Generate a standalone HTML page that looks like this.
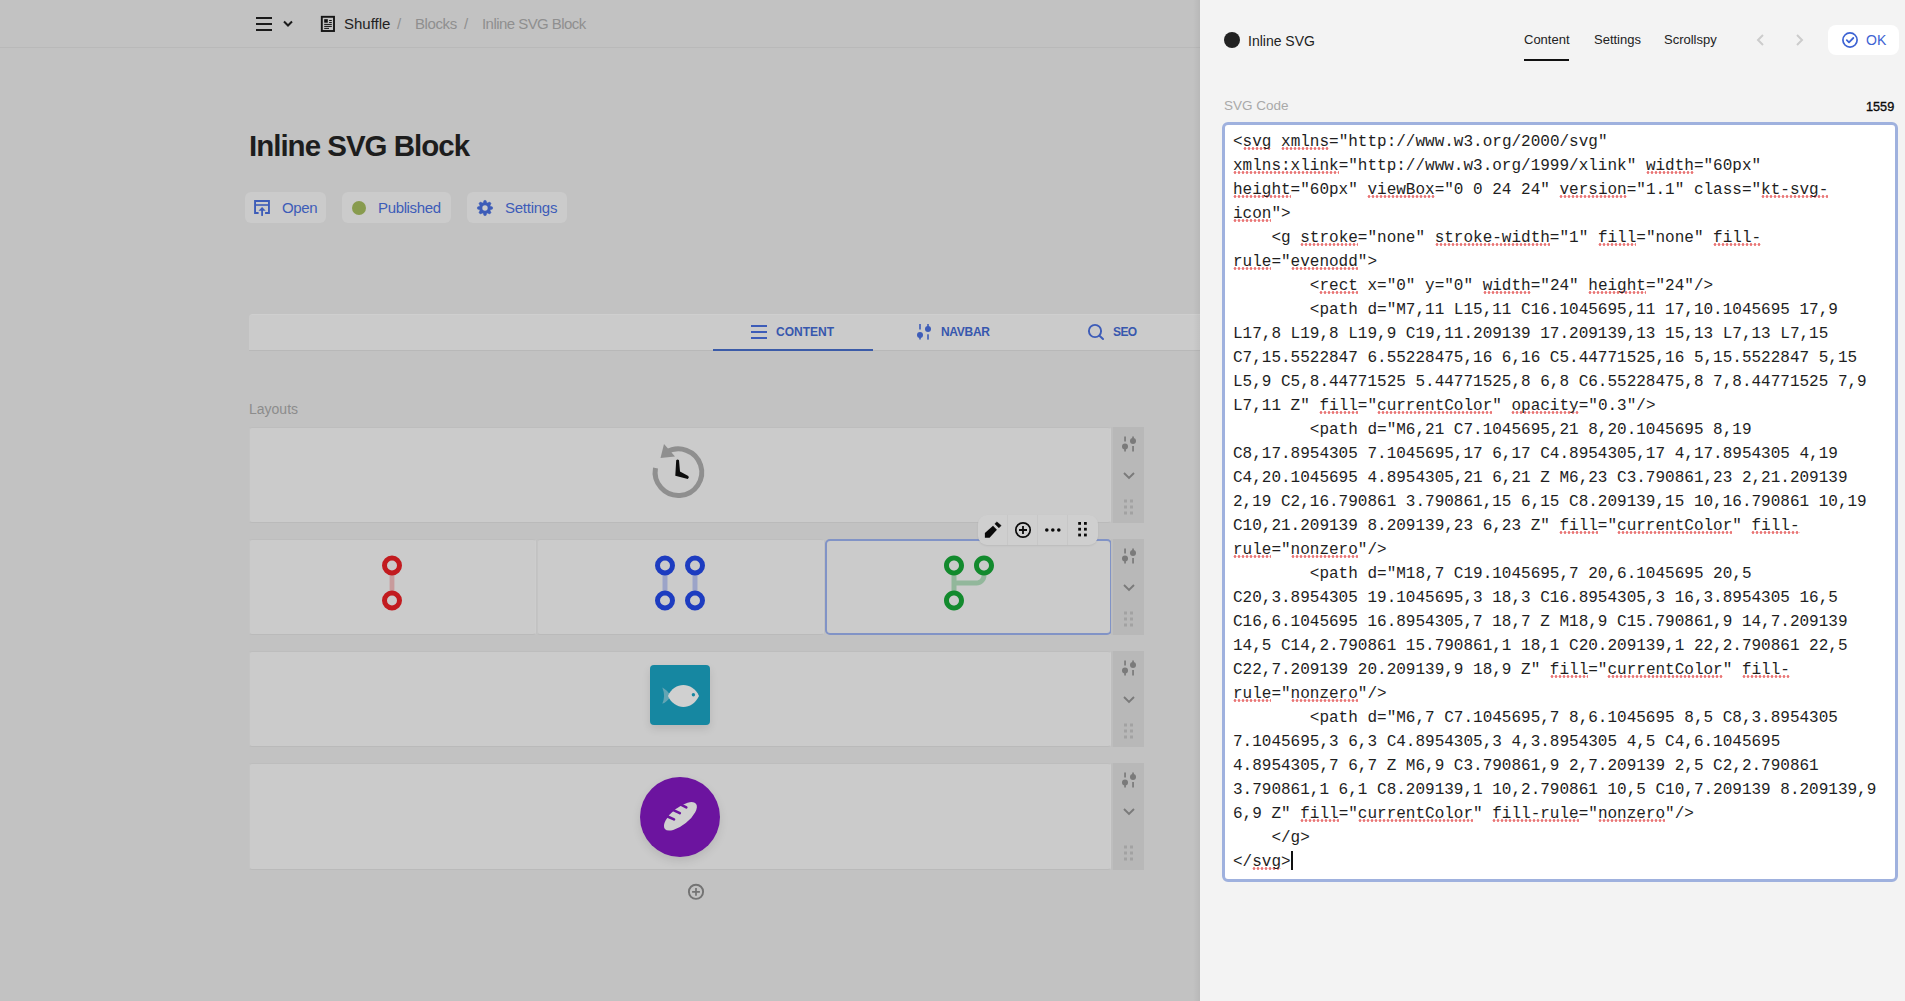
<!DOCTYPE html>
<html><head><meta charset="utf-8">
<style>
*{box-sizing:border-box;margin:0;padding:0}
html,body{width:1905px;height:1001px;overflow:hidden;font-family:"Liberation Sans",sans-serif;background:#c2c2c2}
.a{position:absolute}
#left{position:absolute;left:0;top:0;width:1200px;height:1001px;background:#c2c2c2;overflow:hidden}
#shade{position:absolute;left:1193px;top:0;width:7px;height:1001px;background:linear-gradient(to right,rgba(0,0,0,0),rgba(0,0,0,0.05))}
#hdr{position:absolute;left:0;top:0;width:1200px;height:48px;border-bottom:1px solid #b9b9b9}
.crumb{position:absolute;top:14px;font-size:15px;line-height:20px;white-space:nowrap}
#title{position:absolute;left:249px;top:127px;font-size:29.5px;letter-spacing:-1px;font-weight:bold;color:#1d1d1d;line-height:38px;white-space:nowrap}
.btn{position:absolute;top:192px;height:31px;border-radius:6px;background:#cbcbcb;color:#3d5cb8;font-size:15px}
.btn span{position:absolute;top:7px;line-height:17px;white-space:nowrap}
#tabs{position:absolute;left:249px;top:314px;width:980px;height:37px;background:#cbcbcb;border-top:1px solid #cfcfcf;border-bottom:1px solid #b8b8b8;border-radius:4px 0 0 0}
.tab{position:absolute;top:324px;font-size:12px;font-weight:bold;color:#3757ae;line-height:16px;white-space:nowrap}
#layouts{position:absolute;left:249px;top:401px;font-size:14px;color:#8c8c8c;line-height:16px}
.card{position:absolute;background:#cbcbcb;border:1px solid #c4c4c4;border-top-color:#bdbdbd;border-bottom-color:#bababa;border-right-color:#cdcdcd;border-radius:3px}
.ctrl{position:absolute;left:1111px;width:33px;background:#b8b8b8}
.ctrl:before{content:"";position:absolute;left:0;top:0;width:2px;height:100%;background:#bebebe}
.ctrl svg{position:absolute;left:2px;top:0}
#right{position:absolute;left:1200px;top:0;width:705px;height:1001px;background:#f3f3f3}
.rt{position:absolute;white-space:nowrap;color:#222;line-height:16px}
#ta{position:absolute;left:1222px;top:122px;width:676px;height:760px;border:3px solid #9fb1de;border-radius:6px;background:#fff}
#code{position:absolute;left:1233px;top:130px;font-family:"Liberation Mono",monospace;font-size:16px;line-height:24px;color:#1e1e1e;white-space:pre}
#code i{font-style:normal;background-image:radial-gradient(circle at 2px 1.5px,rgba(228,84,84,0.8) 1px,rgba(228,84,84,0) 1.8px);background-repeat:repeat-x;background-size:4px 3px;background-position:0 calc(100% - 1px)}
</style></head><body>
<div id="left">
  <div id="hdr"></div>
  <svg class="a" style="left:250px;top:10px" width="50" height="30" viewBox="0 0 50 30">
    <rect x="6" y="7" width="16" height="2" fill="#1a1a1a"/>
    <rect x="6" y="13" width="16" height="2" fill="#1a1a1a"/>
    <rect x="6" y="19" width="16" height="2" fill="#1a1a1a"/>
    <path d="M34 11.5 L38 15.5 L42 11.5" stroke="#1a1a1a" stroke-width="2" fill="none"/>
  </svg>
  <svg class="a" style="left:320px;top:15px" width="18" height="18" viewBox="0 0 18 18">
    <rect x="1.8" y="1.8" width="12.2" height="14.2" stroke="#151515" stroke-width="1.9" fill="none"/>
    <rect x="4.2" y="4.2" width="3.6" height="3.5" fill="#111"/>
    <rect x="9.1" y="5" width="2.7" height="1" fill="#111"/>
    <rect x="9.1" y="6.95" width="2.7" height="1" fill="#111"/>
    <rect x="4.2" y="8.9" width="7.6" height="1" fill="#111"/>
    <rect x="4.2" y="10.9" width="7.6" height="1" fill="#111"/>
    <rect x="4.2" y="12.9" width="4.8" height="1" fill="#111"/>
  </svg>
  <div class="crumb" style="left:344px;color:#1f1f1f">Shuffle</div>
  <div class="crumb" style="left:397px;color:#8f8f8f">/</div>
  <div class="crumb" style="left:415px;color:#8f8f8f;letter-spacing:-0.4px">Blocks</div>
  <div class="crumb" style="left:464px;color:#8f8f8f">/</div>
  <div class="crumb" style="left:482px;color:#8f8f8f;letter-spacing:-0.55px">Inline SVG Block</div>
  <div id="title">Inline SVG Block</div>

  <div class="btn" style="left:245px;width:81px">
    <svg class="a" style="left:8px;top:7px" width="18" height="18" viewBox="0 0 18 18">
      <path d="M5.6 13.95 H2.05 V1.95 H15.95 V13.95 H12.1" stroke="#3d5cb8" stroke-width="1.9" fill="none"/>
      <rect x="2" y="5.2" width="14" height="1.6" fill="#3d5cb8"/>
      <path d="M5.5 11.7 L9.1 8 L12.7 11.7 Z" fill="#3d5cb8"/>
      <rect x="8.2" y="10.5" width="1.8" height="6.4" fill="#3d5cb8"/>
    </svg>
    <span style="left:37px;letter-spacing:-0.4px">Open</span>
  </div>
  <div class="btn" style="left:342px;width:109px">
    <div class="a" style="left:10px;top:9px;width:14px;height:14px;border-radius:50%;background:#889b4e"></div>
    <span style="left:36px;letter-spacing:-0.35px">Published</span>
  </div>
  <div class="btn" style="left:467px;width:100px">
    <svg class="a" style="left:9px;top:7px" width="18" height="18" viewBox="-9 -9 18 18">
      <path d="M-1.82 -5.29 L-0.99 -7.53 L0.99 -7.53 L1.82 -5.29 L2.45 -5.03 L4.63 -6.03 L6.03 -4.63 L5.03 -2.45 L5.29 -1.82 L7.53 -0.99 L7.53 0.99 L5.29 1.82 L5.03 2.45 L6.03 4.63 L4.63 6.03 L2.45 5.03 L1.82 5.29 L0.99 7.53 L-0.99 7.53 L-1.82 5.29 L-2.45 5.03 L-4.63 6.03 L-6.03 4.63 L-5.03 2.45 L-5.29 1.82 L-7.53 0.99 L-7.53 -0.99 L-5.29 -1.82 L-5.03 -2.45 L-6.03 -4.63 L-4.63 -6.03 L-2.45 -5.03 Z" fill="#3d5cb8" stroke="#3d5cb8" stroke-width="0.5" stroke-linejoin="round"/>
      <circle r="2.7" fill="#cbcbcb"/>
    </svg>
    <span style="left:38px;letter-spacing:-0.25px">Settings</span>
  </div>

  <div id="tabs"></div>
  <div class="a" style="left:713px;top:349px;width:160px;height:2px;background:#3b5ba8"></div>
  <svg class="a" style="left:751px;top:324px" width="16" height="16" viewBox="0 0 16 16">
    <rect x="0" y="1" width="16" height="2" fill="#3d5cb8"/><rect x="0" y="7" width="16" height="2" fill="#3d5cb8"/><rect x="0" y="13" width="16" height="2" fill="#3d5cb8"/>
  </svg>
  <div class="tab" style="left:776px">CONTENT</div>
  <svg class="a" style="left:914px;top:322px" width="20" height="20" viewBox="0 0 20 20">
    <g fill="#3d5cb8">
    <rect x="5.2" y="2" width="1.6" height="5.5"/><circle cx="6" cy="13" r="3"/><rect x="5.2" y="13" width="1.6" height="4.5"/>
    <rect x="13.2" y="2" width="1.6" height="5"/><circle cx="14" cy="7" r="3"/><rect x="13.2" y="12.3" width="1.6" height="5.3"/>
    </g>
  </svg>
  <div class="tab" style="left:941px;letter-spacing:-0.3px">NAVBAR</div>
  <svg class="a" style="left:1085px;top:321px" width="22" height="22" viewBox="0 0 22 22">
    <circle cx="10" cy="10" r="6.1" stroke="#3d5cb8" stroke-width="1.9" fill="none"/>
    <path d="M14.5 14.8 L18 18" stroke="#3d5cb8" stroke-width="2" stroke-linecap="round"/>
  </svg>
  <div class="tab" style="left:1113px;letter-spacing:-0.6px">SEO</div>

  <div id="layouts">Layouts</div>
  <div class="card" style="left:249px;top:427px;width:862px;height:96px"></div>
  <div class="card" style="left:249px;top:539px;width:287px;height:96px"></div>
  <div class="card" style="left:537px;top:539px;width:287px;height:96px"></div>
  <div class="card" style="left:825px;top:539px;width:287px;height:96px;border:2px solid #8193c6;border-radius:5px"></div>
  <div class="card" style="left:249px;top:651px;width:862px;height:96px"></div>
  <div class="card" style="left:249px;top:763px;width:862px;height:107px"></div>
  <div class="ctrl" style="top:427px;height:96px"><svg width="31" height="96" viewBox="0 0 31 96">
<g fill="#7a7a7a"><rect x="11.2" y="9.5" width="1.7" height="5"/><circle cx="12" cy="19.5" r="3"/><rect x="11.2" y="19.5" width="1.7" height="5"/>
<rect x="19.2" y="9.5" width="1.7" height="4"/><circle cx="20" cy="14" r="3"/><rect x="19.2" y="19" width="1.7" height="5.5"/></g>
<path d="M11 46 L16 51 L21 46" stroke="#7a7a7a" stroke-width="1.9" fill="none"/>
<g fill="#a2a2a2"><rect x="11" y="72.5" width="3" height="3"/><rect x="17" y="72.5" width="3" height="3"/><rect x="11" y="78.5" width="3" height="3"/><rect x="17" y="78.5" width="3" height="3"/><rect x="11" y="84.5" width="3" height="3"/><rect x="17" y="84.5" width="3" height="3"/></g>
</svg></div><div class="ctrl" style="top:539px;height:96px"><svg width="31" height="96" viewBox="0 0 31 96">
<g fill="#7a7a7a"><rect x="11.2" y="9.5" width="1.7" height="5"/><circle cx="12" cy="19.5" r="3"/><rect x="11.2" y="19.5" width="1.7" height="5"/>
<rect x="19.2" y="9.5" width="1.7" height="4"/><circle cx="20" cy="14" r="3"/><rect x="19.2" y="19" width="1.7" height="5.5"/></g>
<path d="M11 46 L16 51 L21 46" stroke="#7a7a7a" stroke-width="1.9" fill="none"/>
<g fill="#a2a2a2"><rect x="11" y="72.5" width="3" height="3"/><rect x="17" y="72.5" width="3" height="3"/><rect x="11" y="78.5" width="3" height="3"/><rect x="17" y="78.5" width="3" height="3"/><rect x="11" y="84.5" width="3" height="3"/><rect x="17" y="84.5" width="3" height="3"/></g>
</svg></div><div class="ctrl" style="top:651px;height:96px"><svg width="31" height="96" viewBox="0 0 31 96">
<g fill="#7a7a7a"><rect x="11.2" y="9.5" width="1.7" height="5"/><circle cx="12" cy="19.5" r="3"/><rect x="11.2" y="19.5" width="1.7" height="5"/>
<rect x="19.2" y="9.5" width="1.7" height="4"/><circle cx="20" cy="14" r="3"/><rect x="19.2" y="19" width="1.7" height="5.5"/></g>
<path d="M11 46 L16 51 L21 46" stroke="#7a7a7a" stroke-width="1.9" fill="none"/>
<g fill="#a2a2a2"><rect x="11" y="72.5" width="3" height="3"/><rect x="17" y="72.5" width="3" height="3"/><rect x="11" y="78.5" width="3" height="3"/><rect x="17" y="78.5" width="3" height="3"/><rect x="11" y="84.5" width="3" height="3"/><rect x="17" y="84.5" width="3" height="3"/></g>
</svg></div><div class="ctrl" style="top:763px;height:107px"><svg width="31" height="107" viewBox="0 0 31 107">
<g fill="#7a7a7a"><rect x="11.2" y="9.5" width="1.7" height="5"/><circle cx="12" cy="19.5" r="3"/><rect x="11.2" y="19.5" width="1.7" height="5"/>
<rect x="19.2" y="9.5" width="1.7" height="4"/><circle cx="20" cy="14" r="3"/><rect x="19.2" y="19" width="1.7" height="5.5"/></g>
<path d="M11 46 L16 51 L21 46" stroke="#7a7a7a" stroke-width="1.9" fill="none"/>
<g fill="#a2a2a2"><rect x="11" y="82.5" width="3" height="3"/><rect x="17" y="82.5" width="3" height="3"/><rect x="11" y="88.5" width="3" height="3"/><rect x="17" y="88.5" width="3" height="3"/><rect x="11" y="94.5" width="3" height="3"/><rect x="17" y="94.5" width="3" height="3"/></g>
</svg></div>

  <!-- clock history -->
  <svg class="a" style="left:648px;top:442px" width="60" height="60" viewBox="0 0 60 60">
    <path d="M7.5 26 A23.3 23.3 0 1 0 18 10.5" stroke="#8f8f8f" stroke-width="5" fill="none"/>
    <path d="M16 2 L12.5 16 L27 14.5 Z" fill="#8f8f8f"/>
    <path d="M28.2 18.3 Q29.6 16.6 31 18.3 L32 29.6 L40.3 34.1 Q41.6 35.8 39.8 37.1 L27.3 33.8 Z" fill="#0d0d0d"/>
  </svg>
  <!-- red -->
  <svg class="a" style="left:362px;top:552.5px" width="60" height="60" viewBox="0 0 24 24">
    <rect x="11.05" y="8.5" width="1.9" height="7" fill="#c21b1f" opacity="0.27"/>
    <circle cx="12" cy="5" r="3" stroke="#c21b1f" stroke-width="2" fill="none"/>
    <circle cx="12" cy="19" r="3" stroke="#c21b1f" stroke-width="2" fill="none"/>
  </svg>
  <!-- blue -->
  <svg class="a" style="left:650px;top:552.5px" width="60" height="60" viewBox="0 0 24 24">
    <g fill="#1d3cc0">
    <rect x="5" y="8.5" width="2" height="7" opacity="0.27"/><rect x="17" y="8.5" width="2" height="7" opacity="0.27"/>
    </g>
    <g stroke="#1d3cc0" stroke-width="2" fill="none">
    <circle cx="6" cy="5" r="3"/><circle cx="18" cy="5" r="3"/><circle cx="6" cy="19" r="3"/><circle cx="18" cy="19" r="3"/>
    </g>
  </svg>
  <!-- green -->
  <svg class="a" style="left:939px;top:552.5px" width="60" height="60" viewBox="0 0 24 24">
    <path d="M7,11 L15,11 C16.1045695,11 17,10.1045695 17,9 L17,8 L19,8 L19,9 C19,11.209139 17.209139,13 15,13 L7,13 L7,15 C7,15.5522847 6.55228475,16 6,16 C5.44771525,16 5,15.5522847 5,15 L5,9 C5,8.44771525 5.44771525,8 6,8 C6.55228475,8 7,8.44771525 7,9 L7,11 Z" fill="#128a2d" opacity="0.3"/>
    <path d="M6,21 C7.1045695,21 8,20.1045695 8,19 C8,17.8954305 7.1045695,17 6,17 C4.8954305,17 4,17.8954305 4,19 C4,20.1045695 4.8954305,21 6,21 Z M6,23 C3.790861,23 2,21.209139 2,19 C2,16.790861 3.790861,15 6,15 C8.209139,15 10,16.790861 10,19 C10,21.209139 8.209139,23 6,23 Z" fill="#128a2d"/>
    <path d="M18,7 C19.1045695,7 20,6.1045695 20,5 C20,3.8954305 19.1045695,3 18,3 C16.8954305,3 16,3.8954305 16,5 C16,6.1045695 16.8954305,7 18,7 Z M18,9 C15.790861,9 14,7.209139 14,5 C14,2.790861 15.790861,1 18,1 C20.209139,1 22,2.790861 22,5 C22,7.209139 20.209139,9 18,9 Z" fill="#128a2d"/>
    <path d="M6,7 C7.1045695,7 8,6.1045695 8,5 C8,3.8954305 7.1045695,3 6,3 C4.8954305,3 4,3.8954305 4,5 C4,6.1045695 4.8954305,7 6,7 Z M6,9 C3.790861,9 2,7.209139 2,5 C2,2.790861 3.790861,1 6,1 C8.209139,1 10,2.790861 10,5 C10,7.209139 8.209139,9 6,9 Z" fill="#128a2d"/>
  </svg>
  <!-- toolbar -->
  <div class="a" style="left:978px;top:515px;width:120px;height:30px;border-radius:9px;background:#cfcfcf;box-shadow:0 1px 2px rgba(0,0,0,0.08)"></div>
  <div class="a" style="left:1007px;top:515px;width:1px;height:30px;background:#c7c7c7"></div>
  <div class="a" style="left:1037px;top:515px;width:1px;height:30px;background:#c7c7c7"></div>
  <div class="a" style="left:1067px;top:515px;width:1px;height:30px;background:#c7c7c7"></div>
  <svg class="a" style="left:978px;top:515px" width="120" height="30" viewBox="0 0 120 30">
    <path d="M6.9 18 L15 10.8 L18.9 14.7 L11.6 22.8 L6.9 22.8 Z" fill="#0a0a0a"/>
    <path d="M16.9 8.8 L18.9 6.9 L23.1 10.6 L20.9 12.8 Z" fill="#0a0a0a" stroke="#0a0a0a" stroke-width="0.6" stroke-linejoin="round"/>
    <circle cx="45" cy="15" r="7.2" stroke="#0a0a0a" stroke-width="1.7" fill="none"/>
    <path d="M45 11 V19 M41 15 H49" stroke="#0a0a0a" stroke-width="1.8"/>
    <circle cx="68.8" cy="15" r="1.8" fill="#0a0a0a"/><circle cx="74.8" cy="15" r="1.8" fill="#0a0a0a"/><circle cx="80.8" cy="15" r="1.8" fill="#0a0a0a"/>
    <g fill="#0a0a0a"><rect x="100.2" y="7" width="2.8" height="2.8"/><rect x="106" y="7" width="2.8" height="2.8"/><rect x="100.2" y="12.8" width="2.8" height="2.8"/><rect x="106" y="12.8" width="2.8" height="2.8"/><rect x="100.2" y="18.6" width="2.8" height="2.8"/><rect x="106" y="18.6" width="2.8" height="2.8"/></g>
  </svg>
  <!-- fish -->
  <div class="a" style="left:650px;top:665px;width:60px;height:60px;border-radius:4px;background:#1687a1;box-shadow:0 4px 8px rgba(0,0,0,0.10)"></div>
  <svg class="a" style="left:650px;top:665px" width="60" height="60" viewBox="0 0 60 60">
    <path d="M12.3 22.6 Q17 25 21 31 Q17 37 12.3 38.8 Q15.8 31 12.3 22.6 Z" fill="#d0d0d0" opacity="0.42"/>
    <path d="M18 31 C24 17, 42 16, 49 31 C42 46, 24 45, 18 31 Z" fill="#d0d0d0"/>
    <circle cx="43.4" cy="29.8" r="1.7" fill="#1687a1"/>
  </svg>
  <!-- bread -->
  <div class="a" style="left:640px;top:777px;width:80px;height:80px;border-radius:50%;background:#6c149f;box-shadow:0 4px 10px rgba(0,0,0,0.10)"></div>
  <svg class="a" style="left:640px;top:777px" width="80" height="80" viewBox="0 0 80 80">
    <ellipse cx="40.4" cy="39.3" rx="20" ry="8.6" transform="rotate(-39 40.4 39.3)" fill="#d0d0d0"/>
    <g stroke="#6c149f" stroke-width="2.6" stroke-linecap="round">
      <path d="M39.5 26.8 L46.3 30.4"/><path d="M32.8 32.8 L39.8 36.2"/><path d="M27 39.2 L34 42.4"/>
    </g>
  </svg>
  <!-- add -->
  <svg class="a" style="left:686px;top:882px" width="20" height="20" viewBox="0 0 20 20">
    <circle cx="10" cy="9.8" r="7.1" stroke="#737373" stroke-width="1.9" fill="none"/>
    <path d="M10 5.9 V13.7 M6.1 9.8 H13.9" stroke="#737373" stroke-width="1.7"/>
  </svg>
  <div id="shade"></div>
</div>

<div id="right">
  <div class="a" style="left:24px;top:32px;width:16px;height:16px;border-radius:50%;background:#222"></div>
  <div class="rt" style="left:48px;top:33px;font-size:14px">Inline SVG</div>
  <div class="rt" style="left:324px;top:32px;font-size:13px">Content</div>
  <div class="a" style="left:324px;top:59px;width:45px;height:2px;background:#111"></div>
  <div class="rt" style="left:394px;top:32px;font-size:13px">Settings</div>
  <div class="rt" style="left:464px;top:32px;font-size:13px">Scrollspy</div>
  <svg class="a" style="left:555px;top:33px" width="50" height="14" viewBox="0 0 50 14">
    <path d="M8 2 L3 7 L8 12" stroke="#cccccc" stroke-width="2" fill="none"/>
    <path d="M42 2 L47 7 L42 12" stroke="#cccccc" stroke-width="2" fill="none"/>
  </svg>
  <div class="a" style="left:628px;top:25px;width:71px;height:30px;border-radius:8px;background:#fff"></div>
  <svg class="a" style="left:641px;top:31px" width="18" height="18" viewBox="0 0 18 18">
    <circle cx="9" cy="9" r="7.1" stroke="#3d63d3" stroke-width="1.7" fill="none"/>
    <path d="M5.8 9.2 L8 11.3 L12.3 7" stroke="#3d63d3" stroke-width="1.8" fill="none" stroke-linecap="round" stroke-linejoin="round"/>
  </svg>
  <div class="rt" style="left:666px;top:32px;font-size:14px;color:#3d63d3">OK</div>
  <div class="rt" style="left:24px;top:98px;font-size:13.5px;color:#a9a9a9">SVG Code</div>
  <div class="rt" style="left:666px;top:99px;font-size:12.7px;color:#0a0a0a;-webkit-text-stroke:0.35px #0a0a0a">1559</div>
</div>
<div id="ta"></div>
<div id="code">&lt;<i>svg</i> <i>xmlns</i>="http://www.w3.org/2000/svg"
<i>xmlns:xlink</i>="http://www.w3.org/1999/xlink" <i>width</i>="60px"
<i>height</i>="60px" <i>viewBox</i>="0 0 24 24" <i>version</i>="1.1" class="<i>kt-svg-</i>
<i>icon</i>"&gt;
    &lt;g <i>stroke</i>="none" <i>stroke-width</i>="1" <i>fill</i>="none" <i>fill-</i>
<i>rule</i>="<i>evenodd</i>"&gt;
        &lt;<i>rect</i> x="0" y="0" <i>width</i>="24" <i>height</i>="24"/&gt;
        &lt;path d="M7,11 L15,11 C16.1045695,11 17,10.1045695 17,9
L17,8 L19,8 L19,9 C19,11.209139 17.209139,13 15,13 L7,13 L7,15
C7,15.5522847 6.55228475,16 6,16 C5.44771525,16 5,15.5522847 5,15
L5,9 C5,8.44771525 5.44771525,8 6,8 C6.55228475,8 7,8.44771525 7,9
L7,11 Z" <i>fill</i>="<i>currentColor</i>" <i>opacity</i>="0.3"/&gt;
        &lt;path d="M6,21 C7.1045695,21 8,20.1045695 8,19
C8,17.8954305 7.1045695,17 6,17 C4.8954305,17 4,17.8954305 4,19
C4,20.1045695 4.8954305,21 6,21 Z M6,23 C3.790861,23 2,21.209139
2,19 C2,16.790861 3.790861,15 6,15 C8.209139,15 10,16.790861 10,19
C10,21.209139 8.209139,23 6,23 Z" <i>fill</i>="<i>currentColor</i>" <i>fill-</i>
<i>rule</i>="<i>nonzero</i>"/&gt;
        &lt;path d="M18,7 C19.1045695,7 20,6.1045695 20,5
C20,3.8954305 19.1045695,3 18,3 C16.8954305,3 16,3.8954305 16,5
C16,6.1045695 16.8954305,7 18,7 Z M18,9 C15.790861,9 14,7.209139
14,5 C14,2.790861 15.790861,1 18,1 C20.209139,1 22,2.790861 22,5
C22,7.209139 20.209139,9 18,9 Z" <i>fill</i>="<i>currentColor</i>" <i>fill-</i>
<i>rule</i>="<i>nonzero</i>"/&gt;
        &lt;path d="M6,7 C7.1045695,7 8,6.1045695 8,5 C8,3.8954305
7.1045695,3 6,3 C4.8954305,3 4,3.8954305 4,5 C4,6.1045695
4.8954305,7 6,7 Z M6,9 C3.790861,9 2,7.209139 2,5 C2,2.790861
3.790861,1 6,1 C8.209139,1 10,2.790861 10,5 C10,7.209139 8.209139,9
6,9 Z" <i>fill</i>="<i>currentColor</i>" <i>fill-rule</i>="<i>nonzero</i>"/&gt;
    &lt;/g&gt;
&lt;/<i>svg</i>&gt;</div>
<div class="a" style="left:1291px;top:851px;width:1.5px;height:19px;background:#111"></div>
</body></html>
